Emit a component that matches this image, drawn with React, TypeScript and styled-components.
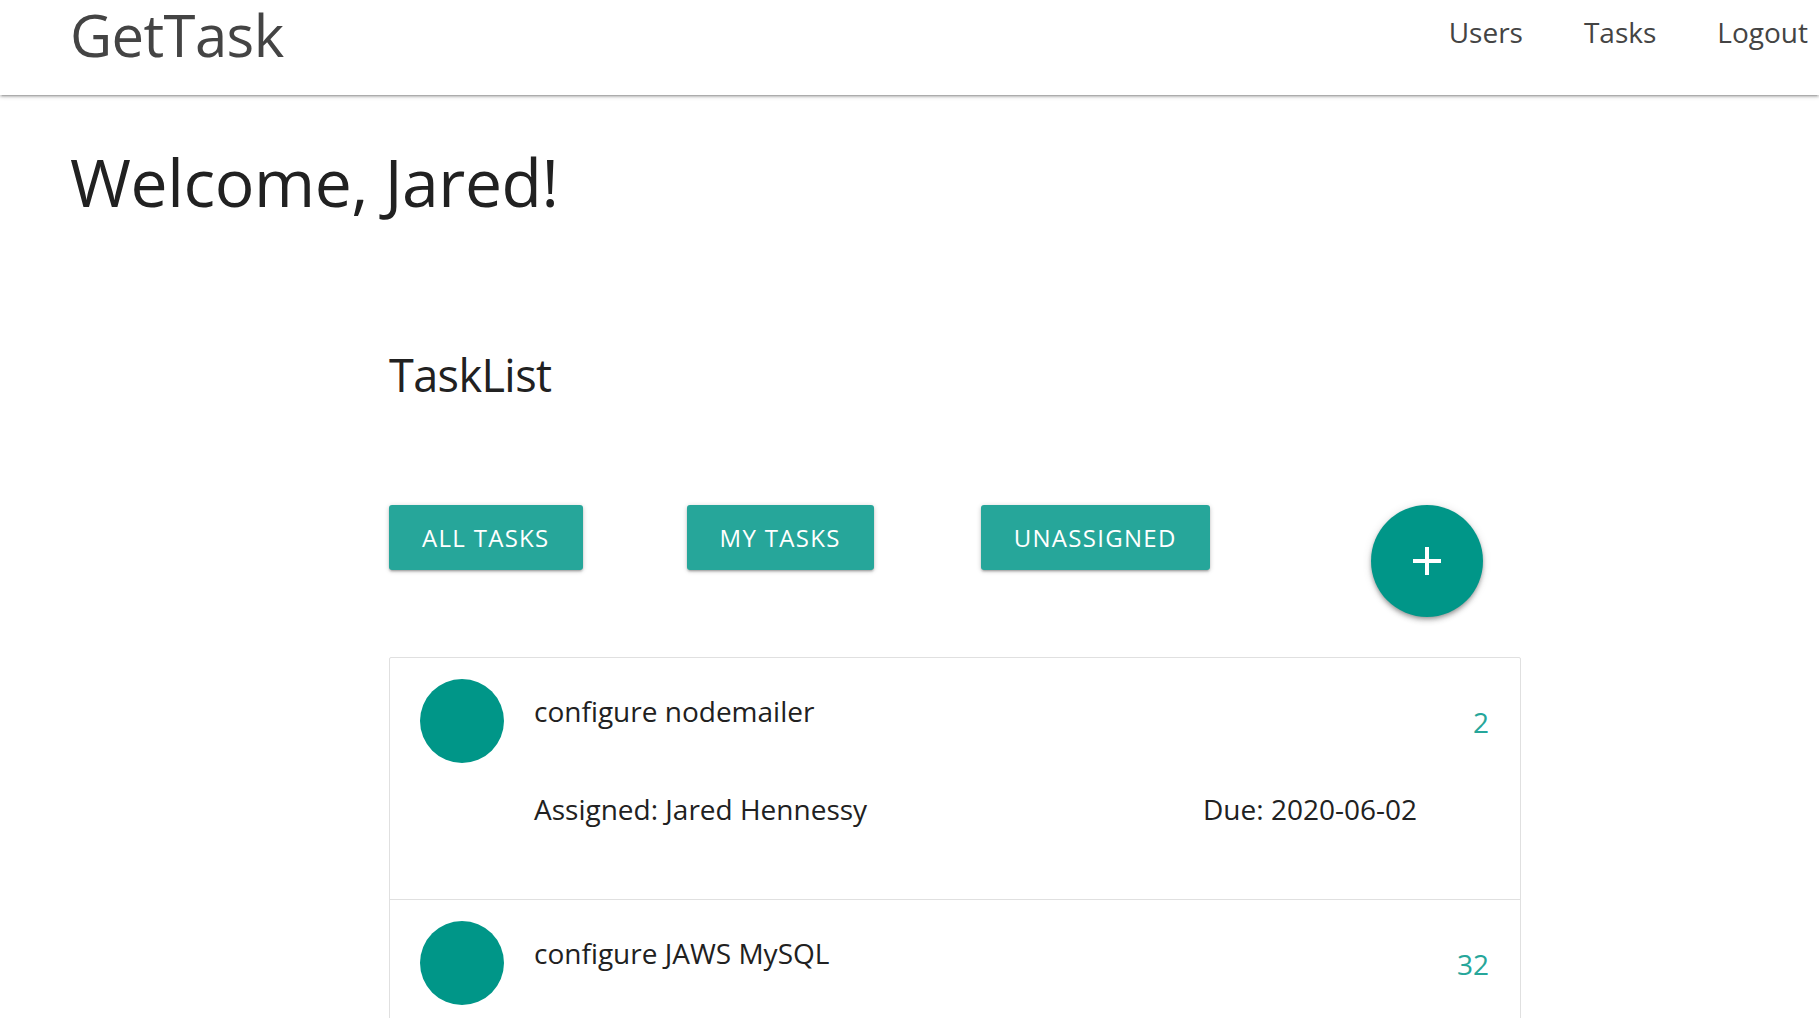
import React from "react";
import styled, { createGlobalStyle } from "styled-components";

const GlobalStyle = createGlobalStyle`
  html, body {
    margin: 0;
    padding: 0;
    background: #fff;
  }
  body {
    font-family: "Open Sans", "Noto Sans", sans-serif;
    color: rgba(0, 0, 0, 0.87);
  }
  * {
    box-sizing: border-box;
  }
`;

interface Task {
  id: number;
  title: string;
  assigned?: string;
  due?: string;
}

const tasks: Task[] = [
  { id: 2, title: "configure nodemailer", assigned: "Jared Hennessy", due: "2020-06-02" },
  { id: 32, title: "configure JAWS MySQL" },
];

// Navbar
const Nav = styled.nav`
  height: 95px;
  display: flex;
  justify-content: space-between;
  align-items: flex-start;
  padding: 0 11px 0 70px;
  background: #fff;
  box-shadow: 0 2px 2px 0 rgba(0, 0, 0, 0.14), 0 3px 1px -2px rgba(0, 0, 0, 0.12),
    0 1px 5px 0 rgba(0, 0, 0, 0.2);
  position: relative;
  z-index: 1;
`;

const Brand = styled.a`
  font-size: 58px;
  line-height: 70px;
  letter-spacing: -0.6px;
  color: #444;
  text-decoration: none;
`;

const NavLinks = styled.ul`
  display: flex;
  gap: 61px;
  margin: 0;
  padding: 0;
  list-style: none;
`;

const NavLink = styled.a`
  display: block;
  font-size: 28px;
  line-height: 64px;
  color: #444;
  text-decoration: none;
`;

// Page content
const Main = styled.main`
  padding: 0 0 0 70px;
`;

const Welcome = styled.h1`
  margin: 46px 0 0;
  font-size: 66px;
  line-height: 80px;
  font-weight: 400;
  letter-spacing: -0.4px;
  color: #212121;
`;

const Section = styled.section`
  width: 1132px;
  margin-left: 319px;
`;

const SectionTitle = styled.h2`
  margin: 126px 0 0;
  font-size: 45px;
  line-height: 56px;
  font-weight: 400;
  letter-spacing: -0.6px;
  color: #212121;
`;

const FilterRow = styled.div`
  display: flex;
  align-items: flex-start;
  margin-top: 102px;
  height: 112px;
`;

const FilterButton = styled.button<{ $gap: number }>`
  height: 65px;
  padding: 0 33px;
  margin-left: ${(p) => p.$gap}px;
  border: none;
  border-radius: 3px;
  background: #26a69a;
  color: #fff;
  font-family: inherit;
  font-size: 24px;
  letter-spacing: 1.3px;
  text-transform: uppercase;
  cursor: pointer;
  box-shadow: 0 2px 2px 0 rgba(0, 0, 0, 0.14), 0 3px 1px -2px rgba(0, 0, 0, 0.12),
    0 1px 5px 0 rgba(0, 0, 0, 0.2);
`;

const Fab = styled.button`
  width: 112px;
  height: 112px;
  margin-left: 161px;
  border: none;
  border-radius: 50%;
  background: #009688;
  display: flex;
  align-items: center;
  justify-content: center;
  cursor: pointer;
  box-shadow: 0 4px 5px 0 rgba(0, 0, 0, 0.14), 0 1px 10px 0 rgba(0, 0, 0, 0.12),
    0 2px 4px -1px rgba(0, 0, 0, 0.3);
`;

const Collection = styled.ul`
  margin: 40px 0 0;
  padding: 0;
  list-style: none;
  border: 1px solid #e0e0e0;
  border-radius: 2px;
  background: #fff;
`;

const Item = styled.li`
  display: flex;
  align-items: flex-start;
  padding: 21px 31px 72px 30px;
  border-bottom: 1px solid #e0e0e0;
`;

const Avatar = styled.span`
  flex: none;
  width: 84px;
  height: 84px;
  border-radius: 50%;
  background: #009688;
  margin-right: 30px;
`;

const Body = styled.div`
  flex: 1;
  padding-top: 14px;
`;

const Title = styled.div`
  font-size: 28px;
  line-height: 36px;
  color: #212121;
`;

const Meta = styled.div`
  display: flex;
  justify-content: space-between;
  margin-top: 62px;
  font-size: 28px;
  line-height: 36px;
  color: #212121;
`;

const Count = styled.span`
  flex: none;
  width: 72px;
  margin-top: 25px;
  text-align: right;
  font-size: 28px;
  line-height: 36px;
  color: #26a69a;
`;

const PlusIcon = () => (
  <svg width="30" height="30" viewBox="0 0 30 30">
    <path d="M15 1v28M1 15h28" stroke="#fff" strokeWidth="4" fill="none" />
  </svg>
);

export default function App() {
  return (
    <>
      <GlobalStyle />
      <Nav>
        <Brand href="#">GetTask</Brand>
        <NavLinks>
          <li>
            <NavLink href="#">Users</NavLink>
          </li>
          <li>
            <NavLink href="#">Tasks</NavLink>
          </li>
          <li>
            <NavLink href="#">Logout</NavLink>
          </li>
        </NavLinks>
      </Nav>
      <Main>
        <Welcome>Welcome, Jared!</Welcome>
        <Section>
          <SectionTitle>TaskList</SectionTitle>
          <FilterRow>
            <FilterButton $gap={0}>All Tasks</FilterButton>
            <FilterButton $gap={104}>My Tasks</FilterButton>
            <FilterButton $gap={107}>Unassigned</FilterButton>
            <Fab aria-label="Add task">
              <PlusIcon />
            </Fab>
          </FilterRow>
          <Collection>
            {tasks.map((t) => (
              <Item key={t.id}>
                <Avatar />
                <Body>
                  <Title>{t.title}</Title>
                  {t.assigned && (
                    <Meta>
                      <span>Assigned: {t.assigned}</span>
                      <span>Due: {t.due}</span>
                    </Meta>
                  )}
                </Body>
                <Count>{t.id}</Count>
              </Item>
            ))}
          </Collection>
        </Section>
      </Main>
    </>
  );
}
